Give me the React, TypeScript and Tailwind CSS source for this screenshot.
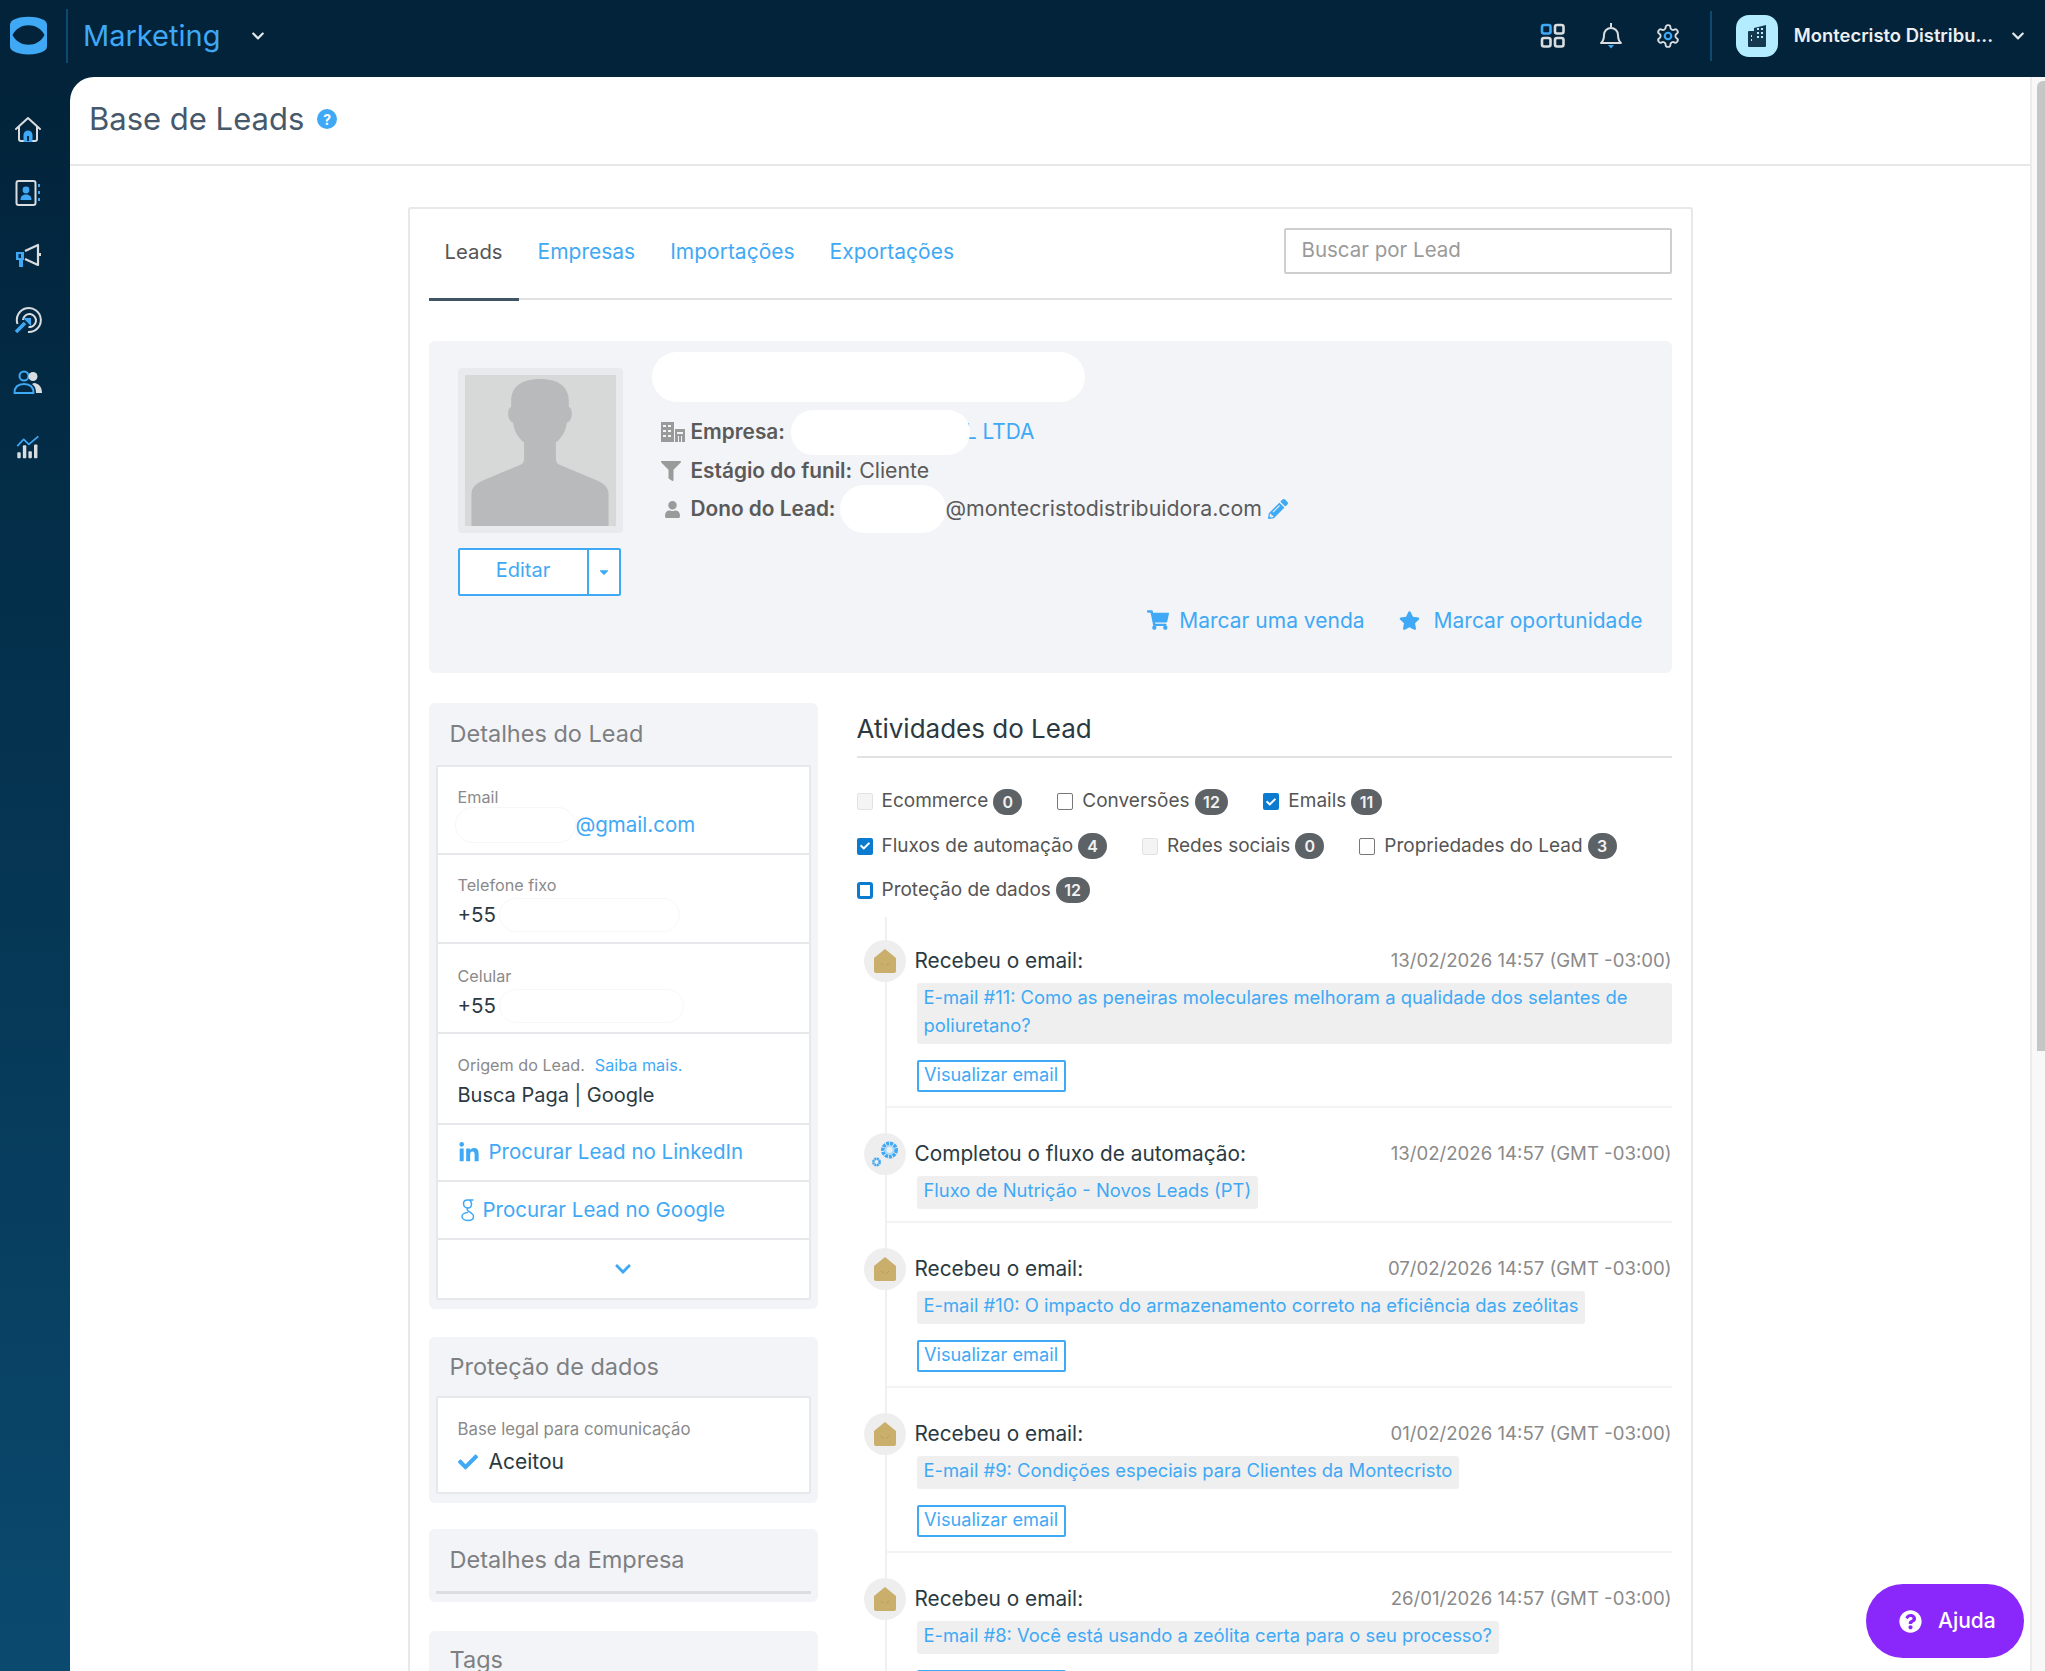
import React from "react";
import { FaChevronDown, FaCheck, FaFilter, FaLinkedinIn, FaPencilAlt, FaQuestionCircle, FaShoppingCart, FaStar, FaUser, FaCaretDown } from "react-icons/fa";

const S = "#d9dde0";
const B = "#3fa9f5";

function Home() {
  return (
    <svg width="28" height="28" viewBox="0 0 28 28" fill="none" stroke={S} strokeWidth="2" strokeLinejoin="round" strokeLinecap="round">
      <path d="M2 13 14 2l12 11" />
      <path d="M5 11v12a2 2 0 0 0 2 2h14a2 2 0 0 0 2-2V11" />
      <path d="M10.5 25v-6a3.5 3.5 0 0 1 7 0v6z" fill={B} stroke={B} />
      <path d="M13 25v-5h2v5z" fill="#02304c" stroke="none" />
    </svg>
  );
}
function Book() {
  return (
    <svg width="28" height="28" viewBox="0 0 28 28" fill="none">
      <rect x="2.5" y="2" width="19" height="24" rx="2" stroke={S} strokeWidth="2" />
      <circle cx="12" cy="11" r="3.4" fill={B} />
      <path d="M6.5 21c0-4 2.5-5.5 5.5-5.5s5.500 1.500 5.500 5.500z" fill={B} />
      <path d="M25 5v3M25 12v3M25 19v3" stroke={B} strokeWidth="2" />
    </svg>
  );
}
function Mega() {
  return (
    <svg width="28" height="28" viewBox="0 0 28 28" fill="none">
      <path d="M11 9 24 3v20l-13-6" stroke={S} strokeWidth="2.200" strokeLinejoin="round" />
      <path d="M25 11h2v3h-2z" fill={S} />
      <path d="M2 10h8v8H9v7H5v-7H2z" fill={B} />
      <rect x="4.500" y="12" width="2.500" height="4" fill="#02304c" />
    </svg>
  );
}
function Target() {
  return (
    <svg width="28" height="28" viewBox="0 0 28 28" fill="none">
      <path d="M3.500 18A12 12 0 1 1 14 26" stroke={S} strokeWidth="2" />
      <path d="M9 14a6.500 6.500 0 1 1 5.500 7" stroke={S} strokeWidth="2" />
      <path d="M2 26 11 17" stroke={B} strokeWidth="3.500" />
      <path d="M9 12h8v8z" fill={B} />
    </svg>
  );
}
function People() {
  return (
    <svg width="30" height="26" viewBox="0 0 30 26" fill="none">
      <circle cx="11" cy="6" r="4.500" stroke={B} strokeWidth="2" />
      <path d="M1.500 23c0-6 3.500-9 9.500-9s9.500 3 9.500 9z" stroke={B} strokeWidth="2" strokeLinejoin="round" />
      <circle cx="20" cy="6.500" r="4.500" fill={S} />
      <path d="M21 13c5 .5 8 4 8 10h-6c0-4-1-7-4-9z" fill={S} />
    </svg>
  );
}
function Chart() {
  return (
    <svg width="26" height="24" viewBox="0 0 28 28" fill="none">
      <path d="M1.500 13 9 5l6 6L26 1.500" stroke={B} strokeWidth="2" strokeLinejoin="round" />
      <rect x="1.500" y="20" width="4" height="7" rx="1" fill={S} />
      <rect x="8" y="12" width="4" height="15" rx="1" fill={S} />
      <rect x="14.500" y="19" width="4" height="8" rx="1" fill={S} />
      <rect x="21" y="11" width="4" height="16" rx="1" fill={S} />
    </svg>
  );
}
function Logo() {
  return (
    <svg width="37" height="43" viewBox="0 0 37 43">
      <path d="M3 6C10 1.500 27 1.500 34 6c2 1 3 3 3 5v21c0 2-1 4-3 5-7 4.500-24 4.500-31 0-2-1-3-3-3-5V11c0-2 1-4 3-5z" fill={B} />
      <path d="M2.500 21C9 8 28 8 34.500 21 28 34 9 34 2.500 21z" fill="#02233a" />
    </svg>
  );
}
function GridIcon() {
  return (
    <svg width="26" height="26" viewBox="0 0 26 26" fill="none" strokeWidth="2.600">
      <rect x="2" y="2" width="8.500" height="8.500" rx="2" stroke={B} />
      <rect x="15" y="2" width="8.500" height="8.500" rx="2" stroke={S} />
      <rect x="2" y="15" width="8.500" height="8.500" rx="2" stroke={S} />
      <rect x="15" y="15" width="8.500" height="8.500" rx="2" stroke={S} />
    </svg>
  );
}
function Bell() {
  return (
    <svg width="24" height="28" viewBox="0 0 24 28" fill="none">
      <path d="M2 21c2.500-2 3-4 3-8a7 7 0 0 1 14 0c0 4 .5 6 3 8z" stroke={S} strokeWidth="2" strokeLinejoin="round" />
      <path d="M12 1v4" stroke={S} strokeWidth="2" />
      <path d="M9 23h6l-3 3.500z" fill={B} />
    </svg>
  );
}
function Gear() {
  return (
    <svg width="26" height="28" viewBox="0 0 24 24" fill="none">
      <path d="M12.220 2h-.44a2 2 0 0 0-2 2v.18a2 2 0 0 1-1 1.730l-.43.25a2 2 0 0 1-2 0l-.15-.08a2 2 0 0 0-2.730.73l-.22.38a2 2 0 0 0 .73 2.730l.15.1a2 2 0 0 1 1 1.720v.51a2 2 0 0 1-1 1.740l-.15.09a2 2 0 0 0-.73 2.730l.22.38a2 2 0 0 0 2.730.73l.15-.08a2 2 0 0 1 2 0l.43.25a2 2 0 0 1 1 1.730V20a2 2 0 0 0 2 2h.44a2 2 0 0 0 2-2v-.18a2 2 0 0 1 1-1.730l.43-.25a2 2 0 0 1 2 0l.15.08a2 2 0 0 0 2.730-.73l.22-.39a2 2 0 0 0-.73-2.730l-.15-.08a2 2 0 0 1-1-1.740v-.5a2 2 0 0 1 1-1.740l.15-.09a2 2 0 0 0 .73-2.730l-.22-.38a2 2 0 0 0-2.730-.73l-.15.08a2 2 0 0 1-2 0l-.43-.25a2 2 0 0 1-1-1.730V4a2 2 0 0 0-2-2z" stroke={S} strokeWidth="1.700" />
      <circle cx="12" cy="12" r="3" stroke={B} strokeWidth="2" />
    </svg>
  );
}
function OrgIcon() {
  return (
    <svg width="22" height="24" viewBox="0 0 22 24">
      <path d="M8 4 20 1v21a1 1 0 0 1-1 1H3a1 1 0 0 1-1-1V8a1 1 0 0 1 1-1h5z" fill="#14394f" />
      <path d="M11 5h2M15 5h2M11 9h2M15 9h2M11 13h2M15 13h2M5 12h1M5 16h1" stroke="#b3ecff" strokeWidth="1.800" />
    </svg>
  );
}
function Building() {
  return (
    <svg width="24" height="22" viewBox="0 0 24 22" fill="#9a9a9a">
      <path d="M0 1h13v20H0zM2 4v2h3V4zm5 0v2h3V4zM2 9v2h3V9zm5 0v2h3V9zM2 14v2h3v-2zm5 0v2h3v-2z" fillRule="evenodd" />
      <path d="M14 8h10v13H14zM16 11v2h6v-2zm1 4v6h1v-6zm3 0v6h1v-6z" fillRule="evenodd" />
    </svg>
  );
}
function Envelope() {
  return (
    <svg width="22" height="24" viewBox="0 0 22 24">
      <path d="M0 9 11 0l11 9v13a2 2 0 0 1-2 2H2a2 2 0 0 1-2-2z" fill="#c9ae6c" />
      <path d="M7 14l2.500 2.500M15 14l-2.500 2.500" stroke="#b69a58" strokeWidth="1" />
    </svg>
  );
}
function Gears() {
  return (
    <svg width="28" height="28" viewBox="0 0 28 28" fill="none">
      <circle cx="18.500" cy="10" r="6.500" stroke={B} strokeWidth="4" strokeDasharray="3 0.800" />
      <circle cx="18.500" cy="10" r="5" fill="#a9d8fa" />
      <circle cx="18.500" cy="10" r="3" fill="#eeeeee" />
      <circle cx="5.500" cy="22" r="3.200" stroke={B} strokeWidth="2.500" strokeDasharray="2 0.500" />
    </svg>
  );
}
function GoogleG() {
  return (
    <svg width="14" height="24" viewBox="0 0 14 24" fill="none" stroke={B} strokeWidth="1.500">
      <path d="M12.500 2H6.500C3.500 2 2.500 4 2.500 5.500 2.500 8 4.500 10 7 10c2.500 0 3.500-2 3.500-4S9 2 8 2" />
      <path d="M7 10c-1.500 1-1 2.500 1 3.500 2.500 1.500 4.500 2.500 4.500 5 0 2.500-2.500 4-5.500 4s-6-1.500-6-4 3-4 6-4" />
    </svg>
  );
}
function Silhouette() {
  return (
    <svg width="148" height="151" viewBox="0 0 148 152" fill="#b9babb" className="block">
      <path d="M5 152V120c0-7 5-11 12-14l38-16c2-1 3-3 3-6V68c-7-6-10-12-11-20-3-1-5-4-5-9 0-4 1-6 3-7V26C45 10 58 4 74 4s29 6 29 22v6c2 1 3 3 3 7 0 5-2 8-5 9-1 8-4 14-11 20v16c0 3 1 5 3 6l38 16c7 3 12 7 12 14v32z" />
    </svg>
  );
}

const icons = [<Home />, <Book />, <Mega />, <Target />, <People />, <Chart />];

function Checkbox({ kind }: { kind: "off" | "empty" | "on" | "focus" }) {
  if (kind === "on")
    return (
      <span className="flex h-[17px] w-[16px] items-center justify-center rounded-[2px] bg-[#0a7bcf] text-white">
        <FaCheck size={10} />
      </span>
    );
  if (kind === "focus") return <span className="block h-[17px] w-[16px] rounded-[3px] border-[3px] border-[#0a7bcf] bg-white" />;
  if (kind === "empty") return <span className="block h-[17px] w-[16px] rounded-[2px] border border-[#777] bg-white" />;
  return <span className="block h-[17px] w-[16px] rounded-[2px] border border-[#e2e2e2] bg-[#f4f4f4]" />;
}

function Filter({ kind, label, n }: { kind: "off" | "empty" | "on" | "focus"; label: string; n: number }) {
  return (
    <div className="flex items-center">
      <Checkbox kind={kind} />
      <span className="ml-[9px] text-[19px] text-[#555]">{label}</span>
      <span className="ml-[5px] flex h-[26px] min-w-[29px] items-center justify-center rounded-full bg-[#5d6266] px-[8.500px] text-[16px] font-semibold text-[#f2f2f2]">{n}</span>
    </div>
  );
}

function Item({ icon, title, date, link, btn = true }: { icon: React.ReactNode; title: string; date: string; link: string; btn?: boolean }) {
  return (
    <div className={`relative ml-[30px] border-b-2 border-[#f3f3f3] pt-[29px] pl-[30px] ${btn ? "pb-[14px]" : "pb-[12px]"}`}>
      <span className="absolute top-[25px] left-[-23px] flex h-[42px] w-[42px] items-center justify-center rounded-full bg-[#eeeeee]">{icon}</span>
      <div className="flex h-[34px] items-center justify-between">
        <span className="ml-[-2px] text-[20.800px] text-[#2b3a42]">{title}</span>
        <span className="text-[18.600px] text-[#8a8a8a]">{date}</span>
      </div>
      <div className="mt-[5px] flex">
        <span className="rounded-[3px] bg-[#efefef] px-[7px] pb-[5px] text-[18.400px] leading-[28px] text-[#3fa9f5]">{link}</span>
      </div>
      {btn && <span className="mt-[16px] flex h-[32px] w-[149px] items-center justify-center rounded-[2px] border-2 border-[#3fa9f5] bg-white pb-[2px] text-[18.200px] text-[#3fa9f5]">Visualizar email</span>}
    </div>
  );
}

function Field({ label, children, h, pt, mt, extra }: { label: string; children: React.ReactNode; h: string; pt: string; mt: string; extra?: React.ReactNode }) {
  return (
    <div className={`border-b-2 border-[#e6e8ec] px-[20px] ${h} ${pt}`}>
      <div className="flex h-[20px] items-center text-[16.200px] text-[#8a8a8a]">
        {label}
        {extra}
      </div>
      <div className={`flex h-[26px] items-center text-[20.500px] text-[#2b3a42] ${mt}`}>{children}</div>
    </div>
  );
}

export default function App() {
  return (
    <div className="relative flex h-[1671px] w-[2045px] flex-col overflow-hidden bg-[#02233a] font-['Inter','Liberation_Sans',sans-serif]">
      <header className="flex h-[77px] shrink-0 items-center bg-[#02233a] pb-[6px] pl-[10px]">
        <Logo />
        <span className="ml-[19px] h-[54px] w-[2px] bg-[#0c4a6e]" />
        <span className="ml-[15px] text-[29px] font-normal text-[#3fa9f5]">Marketing</span>
        <FaChevronDown size={14} className="ml-[31px] text-[#e5e7eb]" />
        <div className="ml-auto flex items-center">
          <GridIcon />
          <span className="ml-[33px]"><Bell /></span>
          <span className="ml-[32px]"><Gear /></span>
          <span className="ml-[29px] h-[50px] w-[2px] bg-[#0c4a6e]" />
          <span className="ml-[24px] flex h-[42px] w-[42px] items-center justify-center rounded-[13px] bg-[#b3ecff]"><OrgIcon /></span>
          <span className="ml-[16px] text-[18.400px] font-semibold text-[#eceff1]">Montecristo Distribu...</span>
          <FaChevronDown size={14} className="mr-[20px] ml-[18px] text-[#e5e7eb]" />
        </div>
      </header>
      <div className="flex min-h-0 flex-1">
        <aside className="flex w-[70px] shrink-0 flex-col items-center bg-gradient-to-b from-[#02233a] to-[#0b4a6f] pt-[21px] pr-[14px]">
          {icons.map((ic, i) => (
            <span key={i} className="flex h-[63.400px] items-center justify-center">{ic}</span>
          ))}
        </aside>
        <main className="flex min-w-0 flex-1 overflow-hidden rounded-tl-[24px] bg-white">
          <div className="min-w-0 flex-1">
            <div className="flex h-[89px] items-center border-b-2 border-[#e8e8e8] pb-[3px] pl-[19px]">
              <h1 className="text-[31px] font-normal text-[#46586a]">Base de Leads</h1>
              <span className="ml-[13px] flex h-[20px] w-[20px] items-center justify-center rounded-full bg-[#3fa9f5] text-[14px] font-bold text-white">?</span>
            </div>
            <div className="mx-auto mt-[41px] w-[1285px] rounded-t-[3px] border-2 border-[#e8e8e8] px-[19px]">
              <div className="flex h-[91px] items-center justify-between border-b-2 border-[#e2e2e2] pb-[6px]">
                <nav className="mb-[-6px] flex h-[91px] items-stretch gap-[3px] pb-[3px] text-[21px] text-[#3fa9f5]">
                  <span className="mb-[-5px] flex items-center border-b-[3px] border-[#3f5565] px-[16px] pb-[2px] text-[20.300px] text-[#555]">Leads</span>
                  <span className="flex items-center px-[16px]">Empresas</span>
                  <span className="flex items-center px-[16px]">Importações</span>
                  <span className="flex items-center px-[16px]">Exportações</span>
                </nav>
                <div className="flex h-[46px] w-[388px] items-center rounded-[2px] border-2 border-[#cfcfcf] px-[16px] text-[20.500px] text-[#9a9a9a]">Buscar por Lead</div>
              </div>

              <section className="mt-[41px] flex h-[332px] rounded-[6px] bg-[#f3f4f7] pt-[27px] pl-[29px]">
                <div className="w-[165px] shrink-0">
                  <div className="flex h-[165px] items-end justify-center rounded-[4px] border-[7px] border-[#e9eaed] bg-[#d7d8d8]">
                    <Silhouette />
                  </div>
                  <div className="mt-[15px] flex h-[48px] w-[163px] rounded-[2px] border-2 border-[#3fa9f5] bg-white text-[#3fa9f5]">
                    <span className="flex w-[127px] items-center justify-center pb-[4px] text-[20px]">Editar</span>
                    <span className="flex flex-1 items-center justify-center border-l-2 border-[#3fa9f5]"><FaCaretDown size={14} /></span>
                  </div>
                </div>
                <div className="ml-[29px] flex min-w-0 flex-1 flex-col">
                  <div className="mt-[-16px] h-[50px] w-[433px] rounded-[25px] bg-white" />
                  <div className="mt-[11px] pl-[9px] text-[21.300px] text-[#5a5a5a]">
                    <div className="flex h-[38px] items-center">
                      <span className="flex w-[30px]"><Building /></span>
                      <b className="text-[20.800px] font-semibold">Empresa:</b>
                      <span className="relative z-10 ml-[6px] h-[45px] w-[179px] rounded-[22px] bg-[#ffffff]" />
                      <span className="ml-[-5px] text-[20.800px] text-[#3fa9f5]">L LTDA</span>
                    </div>
                    <div className="flex h-[39px] items-center">
                      <span className="flex w-[30px] text-[#9a9a9a]"><FaFilter size={20} /></span>
                      <b className="text-[20.800px] font-semibold">Estágio do funil:</b>
                      <span className="ml-[7px]">Cliente</span>
                    </div>
                    <div className="flex h-[38px] items-center">
                      <span className="flex w-[30px] pl-[3px] text-[#9a9a9a]"><FaUser size={17} /></span>
                      <b className="text-[20.800px] font-semibold">Dono do Lead:</b>
                      <span className="ml-[4px] h-[48px] w-[106px] rounded-[24px] bg-white" />
                      <span>@montecristodistribuidora.com</span>
                      <FaPencilAlt size={20} className="ml-[6px] text-[#3fa9f5]" />
                    </div>
                  </div>
                  <div className="mt-auto mr-[29px] mb-[37px] flex items-center justify-end text-[21px] text-[#3fa9f5]">
                    <FaShoppingCart size={22} />
                    <span className="ml-[10px]">Marcar uma venda</span>
                    <FaStar size={21} className="ml-[34px]" />
                    <span className="ml-[14px]">Marcar oportunidade</span>
                  </div>
                </div>
              </section>

              <div className="mt-[30px] flex gap-[39px]">
                <div className="w-[389px] shrink-0">
                  <section className="rounded-[6px] bg-[#f3f4f7] px-[7px] pb-[9px]">
                    <h2 className="flex h-[62px] items-center pl-[14px] text-[23.500px] font-normal text-[#7d7f82]">Detalhes do Lead</h2>
                    <div className="rounded-[2px] border-2 border-b-0 border-[#e6e8ec] bg-white">
                      <Field label="Email" h="h-[88px]" pt="pt-[20px]" mt="mt-[5px]">
                        <span className="ml-[-3px] h-[36px] w-[121px] rounded-[18px] border border-[#f7f7f7] bg-white" />
                        <span className="text-[#3fa9f5]">@gmail.com</span>
                      </Field>
                      <Field label="Telefone fixo" h="h-[89px]" pt="pt-[20px]" mt="mt-[7px]">
                        <span>+55</span>
                        <span className="ml-[3px] h-[34px] w-[181px] rounded-[17px] border border-[#f7f7f7] bg-white" />
                      </Field>
                      <Field label="Celular" h="h-[90px]" pt="pt-[22px]" mt="mt-[7px]">
                        <span>+55</span>
                        <span className="ml-[3px] h-[34px] w-[185px] rounded-[17px] border border-[#f7f7f7] bg-white" />
                      </Field>
                      <Field label="Origem do Lead." h="h-[91px]" pt="pt-[21px]" mt="mt-[7px]" extra={<span className="ml-[10px] text-[#3fa9f5]">Saiba mais.</span>}>
                        <span className="text-[20px]">Busca Paga | Google</span>
                      </Field>
                      <div className="flex h-[57px] items-center border-b-2 border-[#e6e8ec] px-[20px] text-[20.500px] text-[#3fa9f5]">
                        <FaLinkedinIn size={22} />
                        <span className="ml-[9px]">Procurar Lead no LinkedIn</span>
                      </div>
                      <div className="flex h-[58px] items-center border-b-2 border-[#e6e8ec] pl-[23px] text-[20.500px] text-[#3fa9f5]">
                        <GoogleG />
                        <span className="ml-[8px]">Procurar Lead no Google</span>
                      </div>
                      <div className="flex h-[60px] items-center justify-center border-b-2 border-[#e6e8ec] text-[#3fa9f5]"><FaChevronDown size={18} /></div>
                    </div>
                  </section>
                  <section className="mt-[28px] rounded-[6px] bg-[#f3f4f7] px-[7px] pb-[9px]">
                    <h2 className="flex h-[59px] items-center pl-[14px] text-[23.500px] font-normal text-[#7d7f82]">Proteção de dados</h2>
                    <div className="h-[98px] rounded-[2px] border-2 border-[#e6e8ec] bg-white px-[20px] pt-[22px]">
                      <div className="flex h-[20px] items-center text-[16.800px] text-[#8a8a8a]">Base legal para comunicação</div>
                      <div className="mt-[9px] flex h-[26px] items-center text-[21px] text-[#2b3a42]">
                        <FaCheck size={20} className="text-[#3fa9f5]" />
                        <span className="ml-[11px]">Aceitou</span>
                      </div>
                    </div>
                  </section>
                  <section className="mt-[26px] h-[73px] rounded-[6px] bg-[#f3f4f7] px-[7px]">
                    <h2 className="flex h-[62px] items-center pl-[14px] text-[23.500px] font-normal text-[#7d7f82]">Detalhes da Empresa</h2>
                    <div className="h-[3px] bg-[#dcdde0]" />
                  </section>
                  <section className="mt-[29px] h-[73px] rounded-[6px] bg-[#f3f4f7] px-[7px]">
                    <h2 className="flex h-[58px] items-center pl-[14px] text-[23.500px] font-normal text-[#7d7f82]">Tags</h2>
                  </section>
                </div>

                <div className="min-w-0 flex-1">
                  <h2 className="flex h-[55px] items-center border-b-2 border-[#e2e2e2] pb-[2px] text-[26px] font-normal text-[#2b3a42]">Atividades do Lead</h2>
                  <div className="mt-[21px] flex h-[45px] items-center gap-x-[35px]">
                    <Filter kind="off" label="Ecommerce" n={0} />
                    <Filter kind="empty" label="Conversões" n={12} />
                    <Filter kind="on" label="Emails" n={11} />
                  </div>
                  <div className="flex h-[44px] items-center gap-x-[35px]">
                    <Filter kind="on" label="Fluxos de automação" n={4} />
                    <Filter kind="off" label="Redes sociais" n={0} />
                    <Filter kind="empty" label="Propriedades do Lead" n={3} />
                  </div>
                  <div className="flex h-[44px] items-center gap-x-[35px]">
                    <Filter kind="focus" label="Proteção de dados" n={12} />
                  </div>
                  <div className="relative mt-[3px]">
                    <span className="absolute top-[2px] bottom-0 left-[28px] w-[2px] bg-[#f0f0f0]" />
                    <Item icon={<Envelope />} title="Recebeu o email:" date="13/02/2026 14:57 (GMT -03:00)" link="E-mail #11: Como as peneiras moleculares melhoram a qualidade dos selantes de poliuretano?" />
                    <Item btn={false} icon={<Gears />} title="Completou o fluxo de automação:" date="13/02/2026 14:57 (GMT -03:00)" link="Fluxo de Nutrição - Novos Leads (PT)" />
                    <Item icon={<Envelope />} title="Recebeu o email:" date="07/02/2026 14:57 (GMT -03:00)" link="E-mail #10: O impacto do armazenamento correto na eficiência das zeólitas" />
                    <Item icon={<Envelope />} title="Recebeu o email:" date="01/02/2026 14:57 (GMT -03:00)" link="E-mail #9: Condições especiais para Clientes da Montecristo" />
                    <Item icon={<Envelope />} title="Recebeu o email:" date="26/01/2026 14:57 (GMT -03:00)" link="E-mail #8: Você está usando a zeólita certa para o seu processo?" />
                  </div>
                </div>
              </div>
            </div>
          </div>
          <div className="w-[15px] shrink-0 border-l-2 border-[#ececec] bg-[#f8f8f8] pt-[4px] pl-[5px]">
            <div className="h-[970px] rounded-tl-[6px] bg-[#c6c6c6]" />
          </div>
        </main>
      </div>
      <div className="absolute top-[1584px] left-[1866px] flex h-[74px] w-[158px] items-center rounded-[37px] bg-[#8a27fa] pl-[33px] text-white">
        <FaQuestionCircle size={23} />
        <span className="ml-[16px] text-[21px] font-medium">Ajuda</span>
      </div>
    </div>
  );
}
